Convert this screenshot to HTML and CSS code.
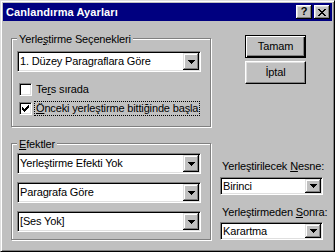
FILE: index.html
```html
<!DOCTYPE html>
<html lang="tr">
  <head>
    <meta charset="UTF-8" />
    <title>Canlandırma Ayarları</title>
    <link rel="stylesheet" href="styles.css">
  </head>
  <body>
    <div class="window">
      <!-- Title bar -->
      <div class="titlebar">
        <span class="title">Canlandırma Ayarları</span>
        <span class="cap-btn help">?</span>
        <span class="cap-btn close">
          <svg width="8" height="7" viewBox="0 0 8 7" shape-rendering="crispEdges">
            <path d="M0 0h2v1h-2z M6 0h2v1h-2z M1 1h2v1h-2z M5 1h2v1h-2z M2 2h4v1h-4z M3 3h2v1h-2z M2 4h4v1h-4z M1 5h2v1h-2z M5 5h2v1h-2z M0 6h2v1h-2z M6 6h2v1h-2z" fill="#000"/>
          </svg>
        </span>
      </div>

      <div class="content">
        <div class="left">
          <!-- Yerleştirme group -->
          <div class="group group-order">
            <div class="legend">Yerle<u>ş</u>tirme Seçenekleri</div>
            <div class="combo order-combo">
              <span class="combo-text">1. Düzey Paragraflara Göre</span>
              <span class="combo-btn">
                <svg width="7" height="4" viewBox="0 0 7 4" shape-rendering="crispEdges"><path d="M0 0h7v1h-1v1h-1v1h-1v1h-1v-1h-1v-1h-1v-1h-1z" fill="#000"/></svg>
              </span>
            </div>
            <div class="check-row first-check">
              <span class="checkbox"></span>
              <span class="check-label">Te<u>r</u>s sırada</span>
            </div>
            <div class="check-row second-check">
              <span class="checkbox">
                <svg width="7" height="7" viewBox="0 0 7 7" shape-rendering="crispEdges"><path d="M6 0h1v3h-1z M5 1h1v3h-1z M4 2h1v3h-1z M3 3h1v3h-1z M2 4h1v3h-1z M1 3h1v3h-1z M0 2h1v3h-1z" fill="#000"/></svg>
              </span>
              <span class="check-label focus"><u>Ö</u>nceki yerleştirme bittiğinde başla</span>
            </div>
          </div>

          <!-- Efektler group -->
          <div class="group group-effects">
            <div class="legend"><u>E</u>fektler</div>
            <div class="combo effect-combo first-effect">
              <span class="combo-text">Yerleştirme Efekti Yok</span>
              <span class="combo-btn">
                <svg width="7" height="4" viewBox="0 0 7 4" shape-rendering="crispEdges"><path d="M0 0h7v1h-1v1h-1v1h-1v1h-1v-1h-1v-1h-1v-1h-1z" fill="#000"/></svg>
              </span>
            </div>
            <div class="combo effect-combo">
              <span class="combo-text">Paragrafa Göre</span>
              <span class="combo-btn">
                <svg width="7" height="4" viewBox="0 0 7 4" shape-rendering="crispEdges"><path d="M0 0h7v1h-1v1h-1v1h-1v1h-1v-1h-1v-1h-1v-1h-1z" fill="#000"/></svg>
              </span>
            </div>
            <div class="combo effect-combo">
              <span class="combo-text">[Ses Yok]</span>
              <span class="combo-btn">
                <svg width="7" height="4" viewBox="0 0 7 4" shape-rendering="crispEdges"><path d="M0 0h7v1h-1v1h-1v1h-1v1h-1v-1h-1v-1h-1v-1h-1z" fill="#000"/></svg>
              </span>
            </div>
          </div>
        </div>

        <div class="right">
          <span class="btn default">Tamam</span>
          <span class="btn cancel">İptal</span>

          <div class="field-label first-field">Yerleştirilecek <u>N</u>esne:</div>
          <div class="combo small-combo">
            <span class="combo-text">Birinci</span>
            <span class="combo-btn">
              <svg width="7" height="4" viewBox="0 0 7 4" shape-rendering="crispEdges"><path d="M0 0h7v1h-1v1h-1v1h-1v1h-1v-1h-1v-1h-1v-1h-1z" fill="#000"/></svg>
            </span>
          </div>
          <div class="field-label second-field">Yerleştirmeden <u>S</u>onra:</div>
          <div class="combo small-combo last-combo">
            <span class="combo-text">Karartma</span>
            <span class="combo-btn">
              <svg width="7" height="4" viewBox="0 0 7 4" shape-rendering="crispEdges"><path d="M0 0h7v1h-1v1h-1v1h-1v1h-1v-1h-1v-1h-1v-1h-1z" fill="#000"/></svg>
            </span>
          </div>
        </div>
      </div>
    </div>
  </body>
</html>
```

FILE: styles.css
```css
body {
  margin: 0;
  background: #c0c0c0;
  font-family: "Liberation Sans", Arial, sans-serif;
  font-size: 11px;
  line-height: 13px;
  letter-spacing: -0.15px;
  color: #000;
}
u {
  text-decoration-thickness: 1px;
  text-underline-offset: 1px;
}
.window {
  box-sizing: border-box;
  width: 335px;
  height: 252px;
  border: 1px solid;
  border-color: #dfdfdf #000 #000 #dfdfdf;
  box-shadow: inset 1px 1px #fff, inset -1px -1px #808080;
  padding: 2px;
  background: #c0c0c0;
}
.titlebar {
  display: flex;
  align-items: center;
  height: 18px;
  background: #000080;
  color: #fff;
  padding: 0 2px 0 3px;
}
.title {
  flex: 1;
  font-weight: bold;
  line-height: 18px;
  letter-spacing: 0.1px;
}
.cap-btn {
  box-sizing: border-box;
  width: 16px;
  height: 14px;
  display: flex;
  align-items: center;
  justify-content: center;
  background: #c0c0c0;
  color: #000;
  font-weight: bold;
  box-shadow: inset -1px -1px #000, inset 1px 1px #fff,
    inset -2px -2px #808080, inset 2px 2px #dfdfdf;
}
.cap-btn + .cap-btn {
  margin-left: 2px;
}
.help {
  padding-bottom: 1px;
}
.content {
  display: flex;
  padding: 14px 0 0 8px;
}
.left {
  width: 200px;
  margin-top: 3px;
}
.right {
  width: 103px;
  margin-left: 9px;
  display: flex;
  flex-direction: column;
}

/* etched group boxes */
.group {
  border: 1px solid #808080;
  box-shadow: inset 1px 1px #fff, 1px 1px #fff;
  padding: 0 9px 11px 5px;
}
.group-effects {
  margin-top: 16px;
  padding-bottom: 7px;
}
.legend {
  width: fit-content;
  margin-top: -6px;
  padding: 0 2px;
  background: #c0c0c0;
  white-space: nowrap;
}

/* combo boxes */
.combo {
  box-sizing: border-box;
  display: flex;
  height: 21px;
  border: 1px solid;
  border-color: #808080 #fff #fff #808080;
  box-shadow: inset 1px 1px #000, inset -1px -1px #dfdfdf;
  padding: 1px;
  background: #fff;
}
.combo-text {
  flex: 1;
  display: flex;
  align-items: center;
  padding-left: 1px;
  white-space: nowrap;
  overflow: hidden;
}
.combo-btn {
  width: 16px;
  display: flex;
  align-items: center;
  justify-content: center;
  background: #c0c0c0;
  box-shadow: inset -1px -1px #000, inset 1px 1px #dfdfdf,
    inset -2px -2px #808080, inset 2px 2px #fff;
}
.order-combo {
  margin-top: 5px;
}
.first-effect {
  margin-top: 2px;
}
.effect-combo + .effect-combo {
  margin-top: 8px;
}
.small-combo {
  height: 18px;
  margin-top: 4px;
}
.last-combo {
  margin-top: 3px;
}

/* check boxes */
.check-row {
  display: flex;
  align-items: center;
  height: 13px;
  padding-left: 2px;
}
.first-check {
  margin-top: 11px;
}
.second-check {
  margin-top: 6px;
}
.checkbox {
  box-sizing: border-box;
  width: 13px;
  height: 13px;
  display: flex;
  align-items: center;
  justify-content: center;
  border: 1px solid;
  border-color: #808080 #fff #fff #808080;
  box-shadow: inset 1px 1px #000, inset -1px -1px #dfdfdf;
  background: #fff;
}
.check-label {
  margin-left: 2px;
  padding: 0 1px;
  border: 1px solid transparent;
  white-space: nowrap;
}
.check-label.focus {
  border: 1px dotted #000;
}

/* push buttons */
.btn {
  box-sizing: border-box;
  width: 61px;
  height: 23px;
  margin-left: 25px;
  display: flex;
  align-items: center;
  justify-content: center;
  border: 1px solid;
  border-color: #fff #000 #000 #fff;
  box-shadow: inset -1px -1px #808080, inset 1px 1px #dfdfdf;
}
.btn.default {
  border-color: #000;
  box-shadow: inset 1px 1px #fff, inset -1px -1px #000,
    inset -2px -2px #808080;
}
.cancel {
  margin-top: 3px;
}
.field-label {
  padding-left: 2px;
  white-space: nowrap;
}
.first-field {
  margin-top: auto;
}
.second-field {
  margin-top: 11px;
}
```
